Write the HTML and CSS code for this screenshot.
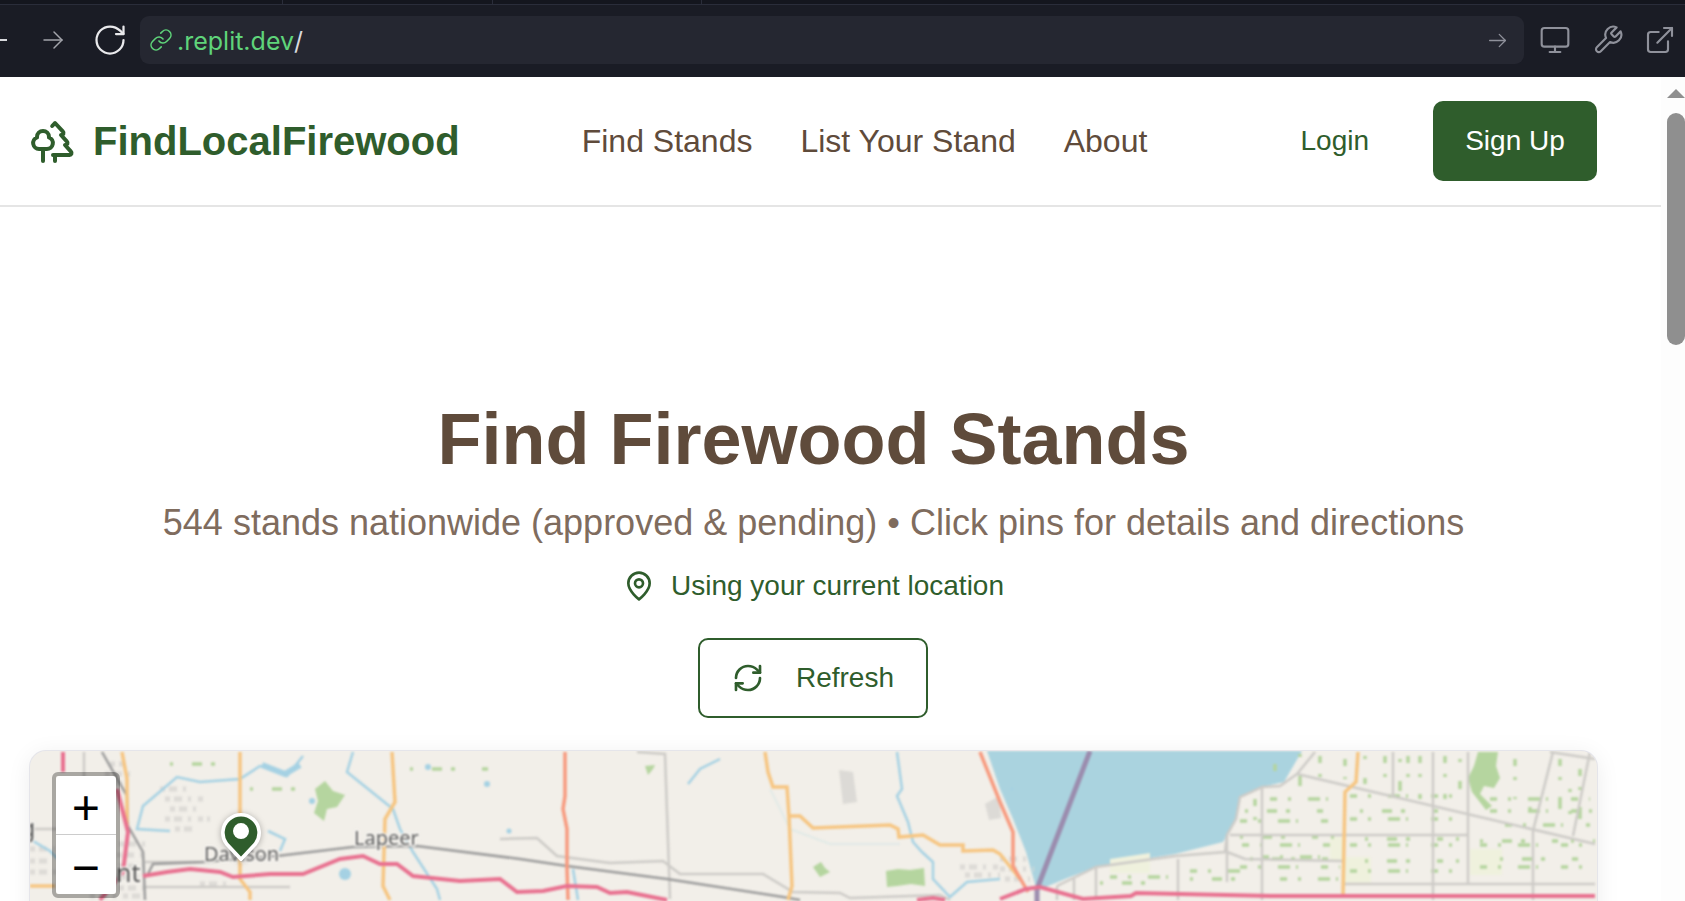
FILE: index.html
```html
<!DOCTYPE html>
<html lang="en">
  <head>
    <meta charset="utf-8">
    <title>FindLocalFirewood</title>
    <link rel="stylesheet" href="styles.css">
  </head>
  <body>
    <div class="tabstrip">
      <span class="tab tab-a"></span>
      <span class="tab tab-b"></span>
      <span class="tab tab-c"></span>
    </div>
    <div class="toolbar">
      <span class="back-stub"></span>
      <svg class="icon tb-forward" viewBox="0 0 24 24"><path d="M3 12h18"/><path d="m13 4 8 8-8 8"/></svg>
      <svg class="icon tb-reload" viewBox="0 0 24 24"><path d="M21 12a9 9 0 1 1-9-9c2.52 0 4.93 1 6.74 2.74L21 8"/><path d="M21 3v5h-5"/></svg>
      <div class="address">
        <svg class="icon addr-link" viewBox="0 0 24 24"><path d="M10 13a5 5 0 0 0 7.54.54l3-3a5 5 0 0 0-7.07-7.07l-1.72 1.71"/><path d="M14 11a5 5 0 0 0-7.54-.54l-3 3a5 5 0 0 0 7.07 7.07l1.71-1.71"/></svg>
        <span class="addr-host">.replit.dev</span><span class="addr-path">/</span>
        <svg class="icon addr-go" viewBox="0 0 24 24"><path d="M3 12h18"/><path d="m14 5 7 7-7 7"/></svg>
      </div>
      <svg class="icon tb-tool" viewBox="0 0 24 24"><rect x="2" y="3" width="20" height="14" rx="2"/><path d="M8 21h8"/><path d="M12 17v4"/></svg>
      <svg class="icon tb-tool" viewBox="0 0 24 24"><path d="M14.7 6.3a1 1 0 0 0 0 1.4l1.6 1.6a1 1 0 0 0 1.4 0l3.77-3.77a6 6 0 0 1-7.94 7.94l-6.91 6.91a2.12 2.12 0 0 1-3-3l6.91-6.91a6 6 0 0 1 7.94-7.94l-3.76 3.76z"/></svg>
      <svg class="icon tb-tool" viewBox="0 0 24 24"><path d="M15 3h6v6"/><path d="M10 14 21 3"/><path d="M18 13v6a2 2 0 0 1-2 2H5a2 2 0 0 1-2-2V8a2 2 0 0 1 2-2h6"/></svg>
    </div>

    <div class="viewport">
      <div class="page">
        <nav class="nav">
          <a class="brand">
            <svg class="icon brand-icon" viewBox="0 0 24 24"><path d="M10 10v.2A3 3 0 0 1 8.9 16H5a3 3 0 0 1-1-5.8V10a3 3 0 0 1 6 0Z"/><path d="M7 16v6"/><path d="M13 19v3"/><path d="M12 19h8.3a1 1 0 0 0 .7-1.7L18 14h.3a1 1 0 0 0 .7-1.7L16 9h.2a1 1 0 0 0 .8-1.7L13 3l-1.4 1.5"/></svg>
            <span>FindLocalFirewood</span>
          </a>
          <div class="nav-links">
            <a>Find Stands</a>
            <a>List Your Stand</a>
            <a>About</a>
          </div>
          <div class="nav-auth">
            <a class="login">Login</a>
            <a class="signup">Sign Up</a>
          </div>
        </nav>

        <main class="main">
          <h1 class="title">Find Firewood Stands</h1>
          <p class="subtitle">544 stands nationwide (approved &amp; pending) • Click pins for details and directions</p>
          <p class="location">
            <svg class="icon location-icon" viewBox="0 0 24 24"><path d="M20 10c0 6-8 12-8 12s-8-6-8-12a8 8 0 0 1 16 0Z"/><circle cx="12" cy="10" r="3"/></svg>
            <span>Using your current location</span>
          </p>
          <button class="refresh">
            <svg class="icon refresh-icon" viewBox="0 0 24 24"><path d="M3 12a9 9 0 0 1 9-9 9.75 9.75 0 0 1 6.74 2.74L21 8"/><path d="M21 3v5h-5"/><path d="M21 12a9 9 0 0 1-9 9 9.75 9.75 0 0 1-6.74-2.74L3 16"/><path d="M8 16H3v5"/></svg>
            <span>Refresh</span>
          </button>

          <div class="map">
            <svg class="tiles" viewBox="30 752 1567 400" width="1567" height="400">
              <path class="water" d="M987 752L1000 790L1013 820L1026 853L1037 892L1048 887L1070 878L1096 868L1175 855L1223 843L1236 820L1240 798L1262 788L1284 783L1302 752Z"/>

              <g class="fields">
                <path d="M1470 850h32v26h-32z"/>
                <path d="M1345 858h26v26h-26z"/>
                <path d="M1330 838h14v24h-14z"/>
                <path d="M1110 860l40 -6v20h-40z"/>
              </g>

              <g class="urban">
                <path d="M839 771l14 2l4 30l-14 2z"/>
                <path d="M985 805l14 -8l2 22l-12 2z"/>
              </g>
              <g class="urban-dots">
                <path d="M86 845H145M84 856H145M86 867H145M80 878H145M86 889H145M90 897H145"/>
                <path d="M160 790H190M165 800H205M170 810H200M165 820H210M175 830H195"/>
                <path d="M200 885H230M30 850H55M30 862H50M30 873H60"/>
                <path d="M110 765H125M105 775H130M105 785H128"/>
                <path d="M1000 860H1030M1000 870H1034M1005 880H1030"/>
                <path d="M960 868H1000M965 876H1000"/>
              </g>

              <g class="green">
                <path d="M315 790l10 -8l8 10l12 4l-8 12l-10 2l-3 12l-10 -8l4 -12z"/>
                <path d="M645 767l10 -1l-2 4l-5 6z"/>
                <path d="M813 868l8 -5l4 6l5 4l-10 5z"/>
                <path d="M886 872l12 -2l12 1l14 -2l1 18l-14 -2l-14 2l-10 1z"/>
                <path d="M1478 753l20 0l-2 14l4 12l-6 10l-10 -2l-4 8l12 12l-6 4l-14 -18l-4 -14l6 -12z"/>
              </g>
              <g class="speckle">
                <path d="M1270 800H1330M1350 797H1460"/>
                <path d="M1490 800H1590"/>
                <path d="M1490 812H1595"/>
                <path d="M1240 822H1330M1350 820H1460"/>
                <path d="M1505 826H1590"/>
                <path d="M1242 846H1340M1350 846H1460M1480 846H1595"/>
                <path d="M1240 868H1340M1350 872H1460M1480 868H1595"/>
                <path d="M1110 878H1170M1190 872H1240"/>
                <path d="M1320 757V795M1385 757V790M1420 757V800M1445 757V800M1408 757V795"/>
                <path d="M1515 760V800M1560 760V810M1580 770V825"/>
                <path d="M1275 765V782M1345 760V780M1255 800V830"/>
                <path d="M1262 858H1330M1280 880H1340"/>
              </g>
              <g class="speckle speckle-b">
                <path d="M1245 812H1330M1360 812H1450"/>
                <path d="M1240 838H1335M1365 840H1460M1480 842H1595"/>
                <path d="M1250 860H1330M1365 862H1460M1500 860H1590"/>
                <path d="M1100 884H1170M1190 880H1250"/>
                <path d="M1300 755V790M1365 757V785M1400 760V792M1460 760V790"/>
                <path d="M1530 808V830M1570 790V815"/>
                <path d="M170 765H220M250 790H300M410 770H500"/>
              </g>

              <g class="river">
                <path d="M303 757L287 777L272 770L260 767L240 780L200 783L177 778L143 807L137 830L170 832"/>
                <path d="M353 753L347 773L393 810L400 830L413 853L437 890L440 901"/>
                <path d="M897 753L902 790L897 797L908 823L913 843L922 853L933 863L933 880L950 898L967 883L1000 880"/>
                <path d="M720 760L700 770L688 785"/>
                <path d="M268 832L285 840L280 852"/>
                <path d="M573 870L578 901"/>
                <path d="M33 842L50 852L58 860"/>
                <path class="river-faint" d="M770 790L790 830L830 845L900 845"/>
                <path class="river-wide" d="M262 766L285 775L300 766"/>
                <circle class="pond" cx="345" cy="875" r="6"/>
                <circle class="pond" cx="487" cy="785" r="3"/>
                <circle class="pond" cx="428" cy="768" r="3"/>
                <circle class="pond" cx="509" cy="832" r="2.5"/>
                <circle class="pond" cx="312" cy="802" r="3"/>
                <circle class="pond" cx="1012" cy="790" r="1.5"/>
              </g>

              <g class="road-grey">
                <path d="M500 840L537 839L557 857L610 864L663 862L680 875L763 875L793 893L840 894L850 899L940 896L950 901"/>
                <path d="M637 753L665 755L670 900"/>
                <path d="M1297 775L1595 845"/>
                <path d="M1297 775L1315 753M1297 775L1280 787L1262 788L1240 798L1236 820L1227 836L1225 853L1175 857L1096 868L1057 887"/>
                <path d="M1262 788V901M1393 753V797M1433 753V901M1468 753V885M1553 753L1533 832V901M1590 753L1573 837"/>
                <path d="M1230 836H1468M1227 853L1245 860L1343 862M1345 885H1595M1227 836V883"/>
                <path d="M1178 860V901M1096 868V901M1074 880V901M1057 887V901"/>
                <path d="M1550 753L1595 760"/>
                <path d="M84 753V790M145 863H210M145 888H290"/>
                <path d="M30 830H60"/>
              </g>
              <g class="road-dark">
                <path d="M102 753L127 797L128 827L143 853L145 901"/>
                <path d="M147 877L153 865L203 863L277 857L353 848L417 847L520 860L567 867L667 880L783 898L800 901"/>
              </g>
              <g class="road-orange">
                <path d="M122 753L127 780L127 830"/>
                <path d="M240 753V880L250 893V901"/>
                <path d="M392 753L395 803L385 820L383 887L390 901"/>
                <path d="M30 887H55"/>
                <path d="M765 753L768 773L773 788L787 788L789 817L792 887L788 901"/>
                <path d="M789 817L800 817L813 829L890 826L898 830L899 838L923 836L940 846L963 846L963 852L993 851L1000 855L1020 880"/>
                <path d="M1358 753L1356 783L1345 793L1343 897"/>
              </g>
              <g class="road-salmon">
                <path d="M565 753V797L563 810L567 830V870L568 901"/>
                <path d="M980 753L1000 803L1013 833V867L1028 893"/>
              </g>
              <path class="road-purple" d="M1090 752L1037 890V905"/>
              <g class="road-pink">
                <path d="M63 753V773M117 790L128 833L123 873L100 901"/>
                <path d="M143 877L167 873L190 870L220 873L233 878L270 875L303 875L340 860L363 857L380 865L397 865L413 877L460 882L500 880L517 893L543 892L567 887L597 888L610 894L627 893L667 901"/>
                <path d="M917 901L933 899L945 901"/>
                <path d="M1000 900L1026 890L1040 888L1083 900L1131 897L1136 894L1271 897L1595 897"/>
              </g>
              <g class="labels">
                <text class="label-city" x="20" y="838">g</text>
                <text class="label-city" x="116" y="883">nt</text>
                <text x="204" y="862">Davison</text>
                <text x="354" y="846">Lapeer</text>
              </g>
            </svg>

            <svg class="pin" viewBox="0 0 44 54"><path d="M22 52L6 35A20 20 0 1 1 38 35Z"/><circle cx="22" cy="21" r="8.8"/></svg>

            <div class="zoom-box">
              <a class="zoom-btn zoom-in">+</a>
              <a class="zoom-btn">−</a>
            </div>
          </div>
        </main>
      </div>

      <div class="scrollbar">
        <span class="scroll-up"></span>
        <span class="scroll-thumb"></span>
      </div>
    </div>
  </body>
</html>
```

FILE: styles.css
```css
html, body {
  margin: 0;
  height: 901px;
  overflow: hidden;
  background: #fff;
  font-family: "Liberation Sans", Arial, sans-serif;
}

.icon {
  fill: none;
  stroke: currentColor;
  stroke-width: 2;
  stroke-linecap: round;
  stroke-linejoin: round;
  flex: none;
  display: block;
}

/* browser chrome */
.tabstrip {
  height: 4px;
  background: #14161e;
  border-bottom: 1px solid #2a2d3a;
  display: flex;
}

.tab {
  height: 4px;
  border-right: 1px solid #2a2d3a;
}
.tab-a { width: 282px; }
.tab-b { width: 209px; }
.tab-c { width: 208px; }

.toolbar {
  height: 72px;
  box-sizing: border-box;
  padding-bottom: 2px;
  background: #1a1c25;
  display: flex;
  align-items: center;
  color: #8f919b;
}

.back-stub {
  flex: none;
  width: 7px;
  height: 2px;
  background: #d8d9dd;
  margin-right: 34px;
}

.tb-forward {
  width: 24px;
  height: 24px;
  stroke-width: 1.5;
  color: #a3a4ab;
  margin-right: 27px;
}

.tb-reload {
  width: 36px;
  height: 36px;
  stroke-width: 1.5;
  color: #e9e9ec;
  margin-right: 12px;
}

.address {
  flex: none;
  width: 1384px;
  height: 48px;
  background: #252731;
  border-radius: 9px;
  display: flex;
  align-items: center;
  box-sizing: border-box;
  padding: 0 10px 0 9px;
  font-family: Inter, "Noto Sans", sans-serif;
  font-size: 25px;
  margin-right: 15px;
}

.addr-link {
  width: 24px;
  height: 24px;
  stroke-width: 1.6;
  color: #5fd47a;
  margin-right: 4px;
}
.addr-host { color: #5fd47a; padding-top: 2px; }
.addr-path { color: #d8d9dd; padding-top: 2px; }

.addr-go {
  width: 21px;
  height: 21px;
  stroke-width: 1.5;
  margin-left: auto;
  margin-right: 6px;
}

.tb-tool {
  width: 32px;
  height: 32px;
  stroke-width: 1.6;
}
.tb-tool + .tb-tool { margin-left: 20.5px; }

/* page */
.viewport {
  display: flex;
  height: 824px;
  overflow: hidden;
}

.page {
  flex: 1;
  min-width: 0;
}

.scrollbar {
  width: 24px;
  background: #fdfdfd;
  flex: none;
}

.scroll-up {
  display: block;
  width: 0;
  margin: 12px 0 0 6px;
  border-left: 9px solid transparent;
  border-right: 9px solid transparent;
  border-bottom: 9px solid #8f8f8f;
}

.scroll-thumb {
  display: block;
  width: 18px;
  height: 232px;
  margin: 15px 0 0 6px;
  background: #8f8f8f;
  border-radius: 9px;
}

.nav {
  height: 128px;
  border-bottom: 2px solid #e5e5e5;
  display: flex;
  align-items: center;
  padding: 0 64px 0 29px;
}

.brand {
  display: flex;
  align-items: center;
  gap: 16px;
  font-size: 40px;
  font-weight: bold;
  color: #2f5d2c;
}

.brand-icon {
  width: 48px;
  height: 48px;
}

.nav-links {
  display: flex;
  gap: 48px;
  margin-left: 122px;
  font-size: 32px;
  color: #5f4b3b;
}

.nav-auth {
  display: flex;
  align-items: center;
  margin-left: auto;
  font-size: 28px;
}

.login {
  color: #2f5d2c;
  margin-right: 64px;
}

.signup {
  background: #2f5d2c;
  color: #fff;
  height: 80px;
  width: 164px;
  border-radius: 10px;
  display: flex;
  align-items: center;
  justify-content: center;
}

.main {
  padding: 0 64px 0 30px;
  text-align: center;
}

.title {
  margin: 0;
  padding-top: 190px;
  font-size: 72px;
  line-height: 84px;
  color: #5f4b3b;
}

.subtitle {
  margin: 20px 0 0;
  font-size: 36px;
  line-height: 44px;
  color: #7f6c5e;
}

.location {
  margin: 19px 0 0;
  display: flex;
  justify-content: center;
  align-items: center;
  gap: 16px;
  font-size: 28px;
  line-height: 44px;
  color: #2f5d2c;
}

.location-icon {
  width: 32px;
  height: 32px;
}

.refresh {
  margin: 30px 1px 0 0;
  width: 230px;
  height: 80px;
  background: #fff;
  border: 2px solid #2f5d2c;
  border-radius: 10px;
  display: inline-flex;
  align-items: center;
  justify-content: center;
  gap: 32px;
  font-family: inherit;
  font-size: 28px;
  color: #2f5d2c;
  vertical-align: top;
}

.refresh-icon {
  width: 32px;
  height: 32px;
}

.map {
  position: relative;
  margin-top: 33px;
  height: 400px;
  border-radius: 16px;
  overflow: hidden;
  background: #f2efe9;
  box-shadow: 0 0 0 1px #e5e5ea, 0 4px 24px rgba(0, 0, 0, 0.08);
}

.tiles {
  display: block;
  filter: blur(0.9px);
}
.tiles path, .tiles circle { fill: none; }

.tiles .water { fill: #aad3df; }
.fields path { fill: #eff1dd !important; }
.urban path { fill: #dcdad6 !important; }
.green path { fill: #b5d59f !important; }

.urban-dots path {
  stroke: #dcdad6;
  stroke-width: 5;
  stroke-dasharray: 5 4 8 6 3 7;
}

.speckle path {
  stroke: #b5d59f;
  stroke-width: 3.5;
  stroke-dasharray: 7 11 3 17 12 6 2 23;
}
.speckle-b path {
  stroke-dasharray: 3 19 10 9 4 27 6 13;
}

.river path { stroke: #a5d1e3; stroke-width: 2.5; }
.river .river-wide { stroke-width: 6; }
.river .river-faint { stroke: #dbe8e6; stroke-width: 1.5; }
.river .pond { fill: #a5d1e3; }

.road-grey path { stroke: #cdcbc7; stroke-width: 2.5; }
.road-dark path { stroke: #9c9c9c; stroke-width: 2.5; }
.road-orange path { stroke: #f6c581; stroke-width: 3.5; }
.road-salmon path { stroke: #f79a7e; stroke-width: 3.5; }
.road-pink path { stroke: #e8708f; stroke-width: 4; }
.tiles .road-purple { stroke: #9b8cae; stroke-width: 5; }

.labels text {
  font-family: "Noto Sans", sans-serif;
  font-size: 20px;
  fill: #5c5c5c;
  stroke: #f6f4f0;
  stroke-width: 3px;
  paint-order: stroke;
}
.labels .label-city { font-size: 25px; fill: #555; }

.pin {
  position: absolute;
  left: 191px;
  top: 61px;
  width: 40px;
  height: 49px;
  filter: drop-shadow(0 1px 3px rgba(0, 0, 0, 0.3));
}
.pin path { fill: #2f5d2c; stroke: #fff; stroke-width: 4; }
.pin circle { fill: #fff; }

.zoom-box {
  position: absolute;
  left: 22px;
  top: 21px;
  width: 60px;
  background-clip: padding-box;
  border: 4px solid rgba(0, 0, 0, 0.3);
  border-radius: 6px;
}

.zoom-btn {
  display: flex;
  align-items: center;
  justify-content: center;
  height: 59px;
  box-sizing: border-box;
  padding-top: 12px;
  background: #fff;
  color: #000;
  font-family: "Liberation Mono", monospace;
  font-size: 48px;
  border-radius: 0 0 4px 4px;
}

.zoom-in {
  border-bottom: 1px solid #ccc;
  border-radius: 4px 4px 0 0;
}
```
